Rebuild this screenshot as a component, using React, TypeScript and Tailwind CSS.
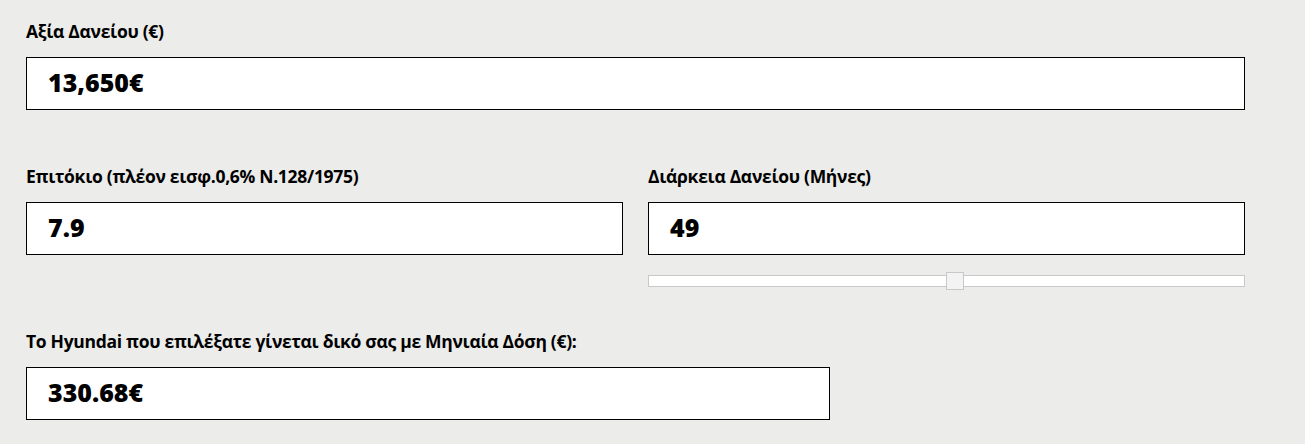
import React from 'react';

const font = { fontFamily: '"Open Sans", "Liberation Sans", sans-serif' };

const Label: React.FC<{ children: React.ReactNode }> = ({ children }) => (
  <div className="h-5 text-[17.5px] leading-5 font-bold text-black tracking-[-0.3px] whitespace-nowrap">{children}</div>
);

const ValueBox: React.FC<{ value: string; className?: string }> = ({ value, className = '' }) => (
  <div className={`mt-4 h-[53px] border border-black bg-white flex items-center pl-[21px] ${className}`}>
    <span className="text-[25px] font-extrabold text-black leading-none -mt-[2px]">{value}</span>
  </div>
);

export default function App() {
  const thumbLeft = 298;
  return (
    <div className="min-h-[444px] w-full bg-[#ececea]" style={font}>
      <div className="w-[1219px] ml-[26px] pt-[21px]">
        <div>
          <Label>Αξία Δανείου (€)</Label>
          <ValueBox value="13,650€" />
        </div>

        <div className="mt-[56px] grid grid-cols-[597px_597px] gap-x-[25px]">
          <div>
            <Label>Επιτόκιο (πλέον εισφ.0,6% N.128/1975)</Label>
            <ValueBox value="7.9" />
          </div>
          <div>
            <Label>Διάρκεια Δανείου (Μήνες)</Label>
            <ValueBox value="49" />
            <div className="relative mt-[20px] h-[12px]">
              <div className="h-[12px] border border-[#c8c8c8] bg-white" />
              <div
                className="absolute top-[-3px] w-[18px] h-[18px] border border-[#c8c8c8] bg-[#f3f3f3]"
                style={{ left: thumbLeft }}
              />
            </div>
          </div>
        </div>

        <div className="mt-[44px]">
          <Label>Το Hyundai που επιλέξατε γίνεται δικό σας με Μηνιαία Δόση (€):</Label>
          <ValueBox value="330.68€" className="w-[804px]" />
        </div>
      </div>
    </div>
  );
}
